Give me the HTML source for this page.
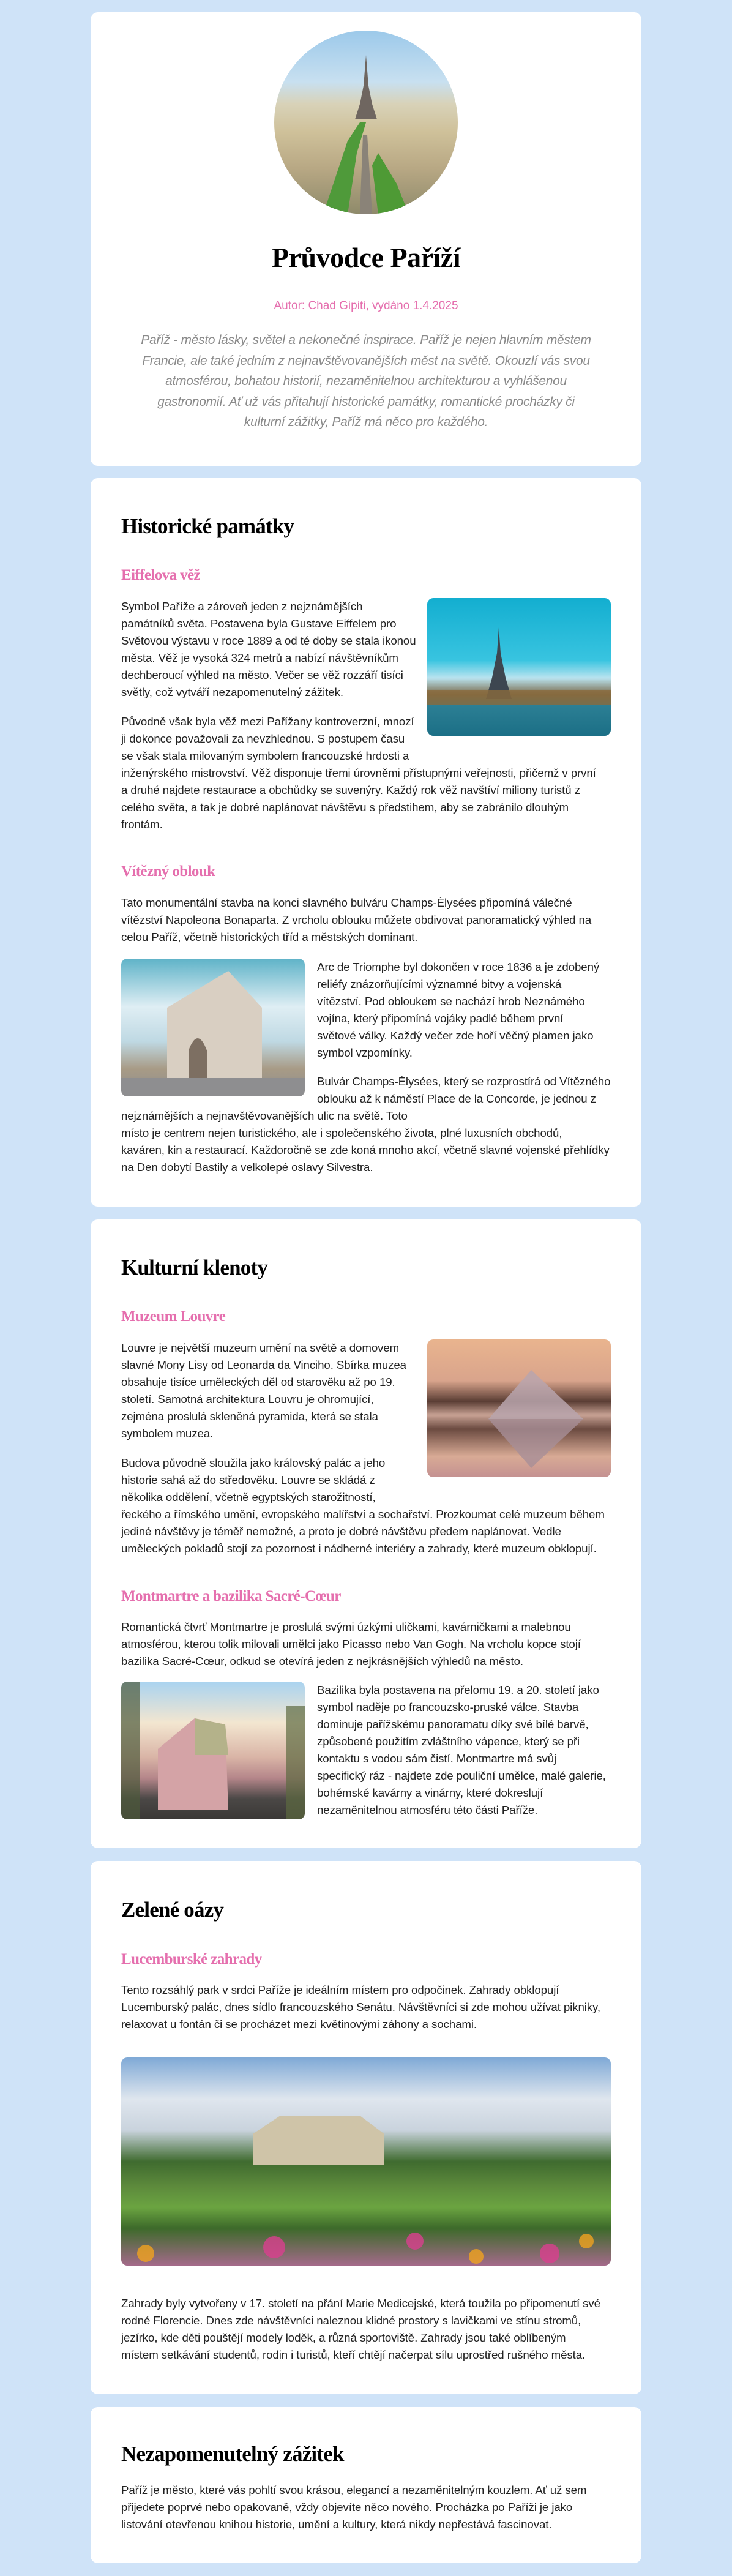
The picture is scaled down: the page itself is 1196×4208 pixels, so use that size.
<!DOCTYPE html>
<html><head><meta charset="utf-8">
<style>
*{box-sizing:border-box;margin:0;padding:0}
html,body{width:1196px;height:4208px;background:#cfe3f8;overflow:hidden}
body{position:relative;font-family:"Liberation Sans",sans-serif;color:#222}
.card{position:absolute;left:148px;width:900px;background:#fff;border-radius:12px;padding:0 50px}
h1{font-family:"Liberation Serif",serif;font-weight:bold;font-size:46px;line-height:60px;text-align:center;color:#000;letter-spacing:-0.5px}
h2{font-family:"Liberation Serif",serif;font-weight:bold;font-size:35px;line-height:44px;color:#000;letter-spacing:-0.8px}
h3{font-family:"Liberation Serif",serif;font-weight:bold;font-size:25px;line-height:36px;color:#e56fae;letter-spacing:-0.6px}
p{font-size:18.7px;line-height:28px;white-space:nowrap;letter-spacing:-0.1px}
.img{border-radius:10px;overflow:hidden}
.fr{float:right;width:300px;height:225px;margin-left:20px}
.fl{float:left;width:300px;height:225px;margin-right:20px}
.clr{clear:both}
</style></head><body>

<div class="card" style="top:20px;height:741px;padding-top:30px">
  <div style="width:300px;height:300px;margin:0 auto;border-radius:50%;overflow:hidden;background:
   linear-gradient(180deg,#9cc9ea 0%,#c8e0f0 28%,#d8d2b8 40%,#cfc19a 55%,#b8a884 75%,#8e8a6a 100%)">
   <svg width="300" height="300" viewBox="0 0 300 300">
     <path d="M150 40 L146 90 L140 120 L132 145 L168 145 L160 120 L154 90 Z" fill="#6f6660"/>
     <path d="M80 300 L120 180 L140 150 L150 150 L135 200 L120 300 Z" fill="#4f9a3a"/>
     <path d="M170 300 L160 220 L170 200 L200 250 L220 300 Z" fill="#4e9a35"/>
     <path d="M140 300 L145 170 L152 170 L160 300 Z" fill="#8a8378"/>
   </svg>
  </div>
  <h1 style="margin-top:41px">Průvodce Paříží</h1>
  <div style="margin-top:37px;text-align:center;color:#e56fae;font-size:19px;line-height:24px">Autor: Chad Gipiti, vydáno 1.4.2025</div>
  <div style="margin-top:27px;text-align:center;color:#8a8a8a;font-style:italic;font-size:21px;line-height:33.5px;letter-spacing:-0.3px;white-space:nowrap">Paříž - město lásky, světel a nekonečné inspirace. Paříž je nejen hlavním městem<br>Francie, ale také jedním z nejnavštěvovanějších měst na světě. Okouzlí vás svou<br>atmosférou, bohatou historií, nezaměnitelnou architekturou a vyhlášenou<br>gastronomií. Ať už vás přitahují historické památky, romantické procházky či<br>kulturní zážitky, Paříž má něco pro každého.</div>
</div>

<div class="card" style="top:781px;height:1190px;padding-top:57px">
  <h2>Historické památky</h2>
  <h3 style="margin-top:40px">Eiffelova věž</h3>
  <div style="margin-top:19px">
    <div class="img fr" style="background:linear-gradient(180deg,#13aed0 0%,#38c4e0 45%,#b9e3ef 58%,#7a6a4a 70%,#2c7f94 78%,#1b6f86 100%);position:relative">
      <svg width="300" height="225" style="position:absolute;left:0;top:0"><path d="M117 48 L114 90 L106 130 L96 165 L138 165 L128 130 L120 90 Z" fill="#3d4650"/><rect x="0" y="150" width="300" height="25" fill="#8a6a3c" opacity=".8"/></svg>
    </div>
    <p>Symbol Paříže a zároveň jeden z nejznámějších<br>památníků světa. Postavena byla Gustave Eiffelem pro<br>Světovou výstavu v roce 1889 a od té doby se stala ikonou<br>města. Věž je vysoká 324 metrů a nabízí návštěvníkům<br>dechberoucí výhled na město. Večer se věž rozzáří tisíci<br>světly, což vytváří nezapomenutelný zážitek.</p>
    <p style="margin-top:20px">Původně však byla věž mezi Pařížany kontroverzní, mnozí<br>ji dokonce považovali za nevzhlednou. S postupem času<br>se však stala milovaným symbolem francouzské hrdosti a<br>inženýrského mistrovství. Věž disponuje třemi úrovněmi přístupnými veřejnosti, přičemž v první<br>a druhé najdete restaurace a obchůdky se suvenýry. Každý rok věž navštíví miliony turistů z<br>celého světa, a tak je dobré naplánovat návštěvu s předstihem, aby se zabránilo dlouhým<br>frontám.</p>
    <div class="clr"></div>
  </div>
  <h3 style="margin-top:45px">Vítězný oblouk</h3>
  <p style="margin-top:19px">Tato monumentální stavba na konci slavného bulváru Champs-Élysées připomíná válečné<br>vítězství Napoleona Bonaparta. Z vrcholu oblouku můžete obdivovat panoramatický výhled na<br>celou Paříž, včetně historických tříd a městských dominant.</p>
  <div style="margin-top:21px">
    <div class="img fl" style="background:linear-gradient(180deg,#5fb3c8 0%,#dfeef4 35%,#bfd9e3 60%,#a89b86 80%,#8d8d8d 100%);position:relative">
      <svg width="300" height="225" style="position:absolute;left:0;top:0"><path d="M75 80 L175 20 L230 80 L230 195 L75 195 Z" fill="#d9cfc2"/><path d="M110 195 L110 150 Q125 110 140 150 L140 195 Z" fill="#7d6f62"/><rect x="0" y="195" width="300" height="30" fill="#8e8e90"/></svg>
    </div>
    <p>Arc de Triomphe byl dokončen v roce 1836 a je zdobený<br>reliéfy znázorňujícími významné bitvy a vojenská<br>vítězství. Pod obloukem se nachází hrob Neznámého<br>vojína, který připomíná vojáky padlé během první<br>světové války. Každý večer zde hoří věčný plamen jako<br>symbol vzpomínky.</p>
    <p style="margin-top:19px">Bulvár Champs-Élysées, který se rozprostírá od Vítězného<br>oblouku až k náměstí Place de la Concorde, je jednou z<br>nejznámějších a nejnavštěvovanějších ulic na světě. Toto<br>místo je centrem nejen turistického, ale i společenského života, plné luxusních obchodů,<br>kaváren, kin a restaurací. Každoročně se zde koná mnoho akcí, včetně slavné vojenské přehlídky<br>na Den dobytí Bastily a velkolepé oslavy Silvestra.</p>
  </div>
</div>

<div class="card" style="top:1992px;height:1027px;padding-top:57px">
  <h2>Kulturní klenoty</h2>
  <h3 style="margin-top:40px">Muzeum Louvre</h3>
  <div style="margin-top:19px">
    <div class="img fr" style="background:linear-gradient(180deg,#e9b48e 0%,#d9a48c 30%,#5a3d34 45%,#c7a193 55%,#6b4a40 65%,#d8aa95 85%,#c49191 100%);position:relative">
      <svg width="300" height="225" style="position:absolute;left:0;top:0"><path d="M170 50 L100 130 L255 130 Z" fill="#b9a4ad" opacity=".85"/><path d="M170 210 L100 130 L255 130 Z" fill="#a88f97" opacity=".8"/></svg>
    </div>
    <p>Louvre je největší muzeum umění na světě a domovem<br>slavné Mony Lisy od Leonarda da Vinciho. Sbírka muzea<br>obsahuje tisíce uměleckých děl od starověku až po 19.<br>století. Samotná architektura Louvru je ohromující,<br>zejména proslulá skleněná pyramida, která se stala<br>symbolem muzea.</p>
    <p style="margin-top:20px">Budova původně sloužila jako královský palác a jeho<br>historie sahá až do středověku. Louvre se skládá z<br>několika oddělení, včetně egyptských starožitností,<br>řeckého a římského umění, evropského malířství a sochařství. Prozkoumat celé muzeum během<br>jediné návštěvy je téměř nemožné, a proto je dobré návštěvu předem naplánovat. Vedle<br>uměleckých pokladů stojí za pozornost i nádherné interiéry a zahrady, které muzeum obklopují.</p>
    <div class="clr"></div>
  </div>
  <h3 style="margin-top:46px">Montmartre a bazilika Sacré-Cœur</h3>
  <p style="margin-top:18px">Romantická čtvrť Montmartre je proslulá svými úzkými uličkami, kavárničkami a malebnou<br>atmosférou, kterou tolik milovali umělci jako Picasso nebo Van Gogh. Na vrcholu kopce stojí<br>bazilika Sacré-Cœur, odkud se otevírá jeden z nejkrásnějších výhledů na město.</p>
  <div style="margin-top:19px">
    <div class="img fl" style="background:linear-gradient(180deg,#a9d3f0 0%,#f3e6d0 30%,#d9b4a6 55%,#b5868a 70%,#4b4846 85%,#3a3836 100%);position:relative">
      <svg width="300" height="225" style="position:absolute;left:0;top:0"><rect x="0" y="0" width="30" height="225" fill="#4d5a3a" opacity=".7"/><path d="M60 210 L60 110 L120 60 L170 70 L175 210 Z" fill="#d4a3a6"/><path d="M120 60 L170 70 L175 120 L120 120 Z" fill="#b4b28a"/><rect x="270" y="40" width="30" height="185" fill="#5d6a40" opacity=".7"/></svg>
    </div>
    <p>Bazilika byla postavena na přelomu 19. a 20. století jako<br>symbol naděje po francouzsko-pruské válce. Stavba<br>dominuje pařížskému panoramatu díky své bílé barvě,<br>způsobené použitím zvláštního vápence, který se při<br>kontaktu s vodou sám čistí. Montmartre má svůj<br>specifický ráz - najdete zde pouliční umělce, malé galerie,<br>bohémské kavárny a vinárny, které dokreslují<br>nezaměnitelnou atmosféru této části Paříže.</p>
  </div>
</div>

<div class="card" style="top:3040px;height:871px;padding-top:58px">
  <h2>Zelené oázy</h2>
  <h3 style="margin-top:41px">Lucemburské zahrady</h3>
  <p style="margin-top:18px">Tento rozsáhlý park v srdci Paříže je ideálním místem pro odpočinek. Zahrady obklopují<br>Lucemburský palác, dnes sídlo francouzského Senátu. Návštěvníci si zde mohou užívat pikniky,<br>relaxovat u fontán či se procházet mezi květinovými záhony a sochami.</p>
  <div class="img" style="margin-top:40px;height:340px;position:relative;background:linear-gradient(180deg,#7fa9d6 0%,#dfe6ee 20%,#c9d3dd 35%,#3f6b2f 50%,#5d8a3c 62%,#6ba441 72%,#3d6a2a 82%,#a46a8a 100%)">
    <svg width="799" height="340" style="position:absolute;left:0;top:0"><path d="M215 175 L215 125 L260 95 L390 95 L430 125 L430 175 Z" fill="#cfc4a8"/><g fill="#d9408f" opacity=".8"><circle cx="250" cy="310" r="18"/><circle cx="480" cy="300" r="14"/><circle cx="700" cy="320" r="16"/></g><g fill="#f0a21f" opacity=".8"><circle cx="40" cy="320" r="14"/><circle cx="580" cy="325" r="12"/><circle cx="760" cy="300" r="12"/></g></svg>
  </div>
  <p style="margin-top:48px">Zahrady byly vytvořeny v 17. století na přání Marie Medicejské, která toužila po připomenutí své<br>rodné Florencie. Dnes zde návštěvníci naleznou klidné prostory s lavičkami ve stínu stromů,<br>jezírko, kde děti pouštějí modely loděk, a různá sportoviště. Zahrady jsou také oblíbeným<br>místem setkávání studentů, rodin i turistů, kteří chtějí načerpat sílu uprostřed rušného města.</p>
</div>

<div class="card" style="top:3932px;height:255px;padding-top:55px">
  <h2>Nezapomenutelný zážitek</h2>
  <p style="margin-top:23px">Paříž je město, které vás pohltí svou krásou, elegancí a nezaměnitelným kouzlem. Ať už sem<br>přijedete poprvé nebo opakovaně, vždy objevíte něco nového. Procházka po Paříži je jako<br>listování otevřenou knihou historie, umění a kultury, která nikdy nepřestává fascinovat.</p>
</div>

</body></html>
